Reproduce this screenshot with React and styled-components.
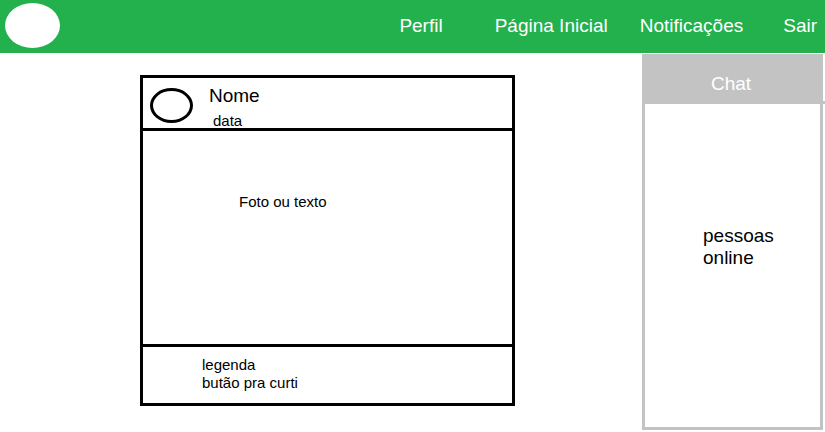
import React from "react";
import styled, { createGlobalStyle } from "styled-components";

const GlobalStyle = createGlobalStyle`
  *, *::before, *::after { box-sizing: border-box; }
  body {
    margin: 0;
    background: #fff;
    color: #000;
    font-family: "Liberation Sans", Arial, sans-serif;
  }
`;

const line = "3px solid #000";
const gray = "#c3c3c3";

const TopBar = styled.header`
  display: flex;
  align-items: center;
  justify-content: space-between;
  height: 53px;
  padding: 0 8px 2px 5px;
  background: #22b14c;
`;

const Logo = styled.a`
  width: 55px;
  height: 45px;
  border-radius: 50%;
  background: #fff;
`;

const Nav = styled.nav`
  display: flex;
`;

const NavLink = styled.a`
  margin-left: ${({ $space }) => $space}px;
  color: #fff;
  font-size: 19px;
  line-height: 22px;
  text-decoration: none;
  white-space: nowrap;
`;

const Content = styled.div`
  display: grid;
  grid-template-columns: minmax(0, 1fr) 181px;
  padding: 1px 2px 0 0;
`;

const Feed = styled.main`
  display: flex;
  justify-content: center;
  align-items: flex-start;
  padding: 21px 0 0 13px;
`;

const Post = styled.article`
  width: 100%;
  max-width: 375px;
  border: ${line};
`;

const PostHeader = styled.header`
  display: flex;
  gap: 16px;
  height: 53px;
  padding: 7px 7px 0;
  border-bottom: ${line};
`;

const Avatar = styled.div`
  width: 43px;
  height: 35px;
  margin-top: 3px;
  border: ${line};
  border-radius: 50%;
`;

const Author = styled.div`
  display: flex;
  flex-direction: column;
  gap: 5px;
`;

const Name = styled.h2`
  margin: 0;
  font-size: 19px;
  font-weight: 400;
  line-height: 22px;
`;

const PostDate = styled.time`
  padding-left: 4px;
  font-size: 15px;
  line-height: 18px;
`;

const PostBody = styled.div`
  min-height: 213px;
  padding: 62px 16px 0 96px;
  font-size: 15px;
  line-height: 18px;
`;

const PostFooter = styled.footer`
  display: flex;
  flex-direction: column;
  align-items: flex-start;
  min-height: 59px;
  padding: 9px 16px 0 59px;
  border-top: ${line};
  font-size: 15px;
  line-height: 18px;
`;

const LikeButton = styled.button`
  padding: 0;
  border: 0;
  background: none;
  color: inherit;
  font: inherit;
  cursor: pointer;
`;

const Chat = styled.aside`
  min-height: 376px;
  border: 3px solid ${gray};
  border-top: 0;
`;

const ChatHeader = styled.header`
  position: relative;
  height: 50px;
  padding: 19px 3px 0 0;
  background: ${gray};
  color: #fff;
  text-align: center;

  &::after {
    content: "";
    position: absolute;
    right: -5px;
    bottom: 0;
    width: 5px;
    height: 3px;
    background: ${gray};
  }
`;

const ChatTitle = styled.h2`
  margin: 0;
  font-size: 19px;
  font-weight: 400;
  line-height: 22px;
`;

const OnlineList = styled.div`
  padding: 121px 36px 0 58px;
  font-size: 19px;
  line-height: 22px;
`;

const links = [
  { label: "Perfil", space: 0 },
  { label: "Página Inicial", space: 52 },
  { label: "Notificações", space: 32 },
  { label: "Sair", space: 40 },
];

export default function App() {
  return (
    <>
      <GlobalStyle />
      <TopBar>
        <Logo href="#" aria-label="Logo" />
        <Nav>
          {links.map(({ label, space }) => (
            <NavLink key={label} href="#" $space={space}>
              {label}
            </NavLink>
          ))}
        </Nav>
      </TopBar>
      <Content>
        <Feed>
          <Post>
            <PostHeader>
              <Avatar />
              <Author>
                <Name>Nome</Name>
                <PostDate>data</PostDate>
              </Author>
            </PostHeader>
            <PostBody>Foto ou texto</PostBody>
            <PostFooter>
              <span>legenda</span>
              <LikeButton type="button">butão pra curti</LikeButton>
            </PostFooter>
          </Post>
        </Feed>
        <Chat>
          <ChatHeader>
            <ChatTitle>Chat</ChatTitle>
          </ChatHeader>
          <OnlineList>pessoas online</OnlineList>
        </Chat>
      </Content>
    </>
  );
}
